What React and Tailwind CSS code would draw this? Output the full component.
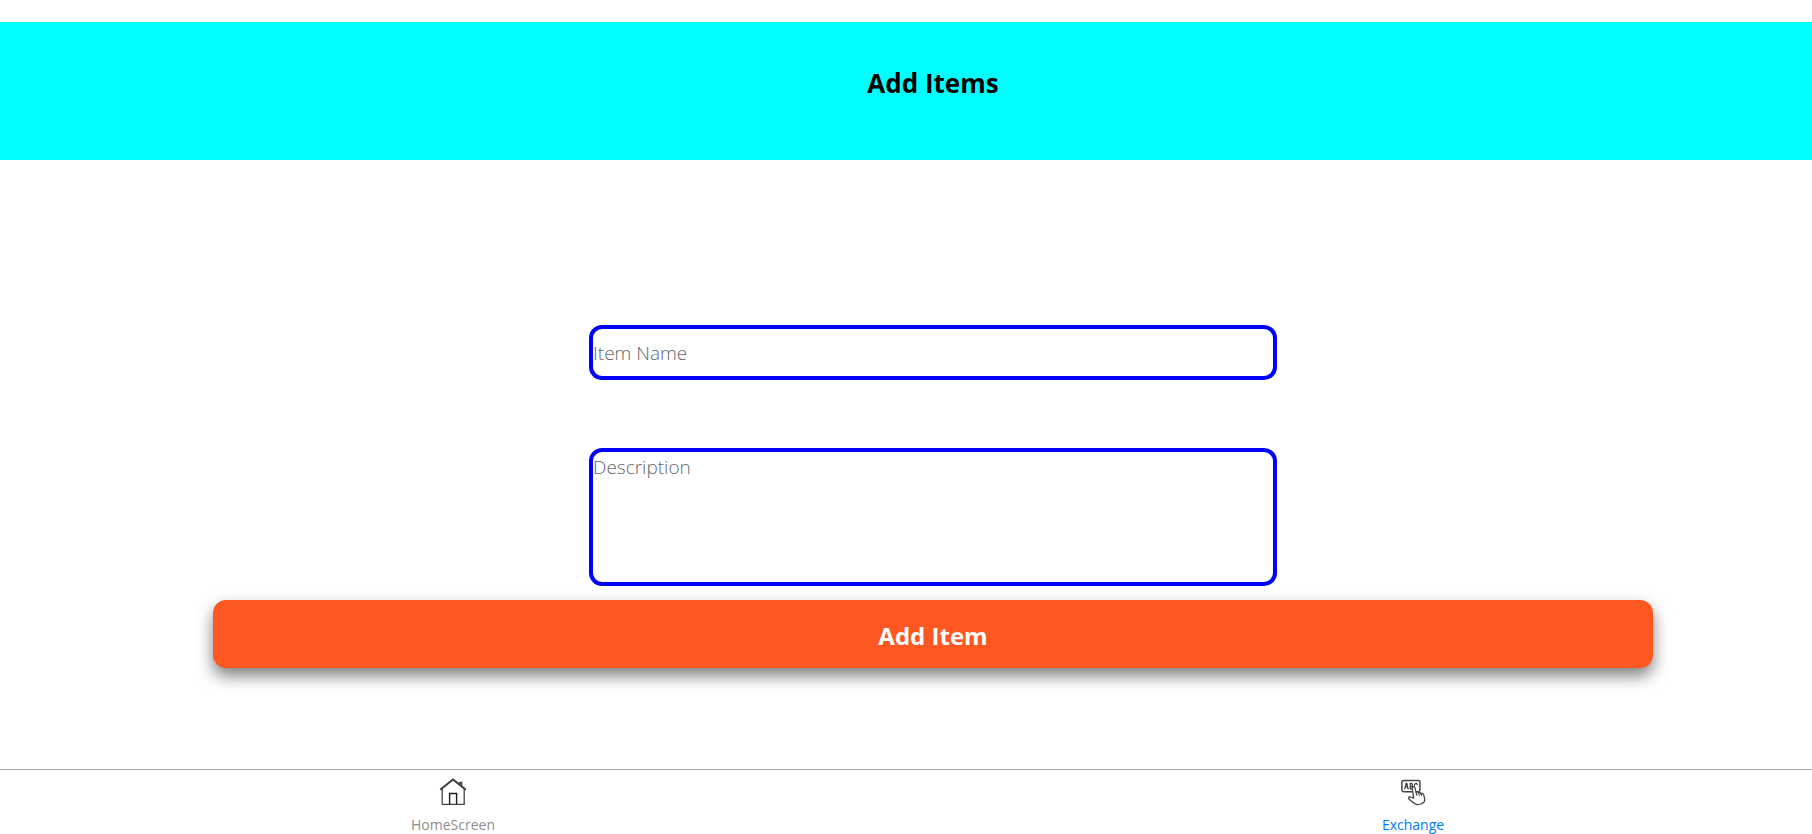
function HomeIcon() {
  return (
    <svg viewBox="0 0 30 30" className="size-[30px]" fill="none" stroke="#444" strokeWidth="1.300" aria-hidden="true">
      <path d="M4.200 12V27.400H26.200V12" />
      <path d="M2.200 12.800 15 2.500 27.800 12.800" stroke="#3a3a3a" strokeWidth="1.900" />
      <path d="M11.600 27V16.500H18.600V27" stroke="#1c1c1c" strokeWidth="1.400" />
      <path d="M20 5.200 24.300 4.600V9Z" fill="#444" stroke="none" />
    </svg>
  );
}

function ExchangeIcon() {
  return (
    <svg viewBox="0 0 30 30" className="size-[30px]" fill="none" stroke="#444" strokeWidth="1.500" strokeLinecap="round" strokeLinejoin="round" aria-hidden="true">
      <rect x="3.900" y="3.500" width="18" height="11.200" rx="1.600" />
      <g stroke="#333" strokeWidth="1.200">
        <path d="M6.800 11.800 8.200 6.400h.6l1.300 5.400M7.300 10h2.400" />
        <path d="M12.200 6.400v5.400h1c2 0 2-2.600.2-2.700 1.500-.3 1.300-2.700-.2-2.700Z" />
        <path d="M19.400 7.800c-.6-2-2.900-1.800-2.900.8" />
      </g>
      <path
        d="M14.200 11.300c-.2-1.800 2.400-2.200 2.800-.4l1.100 4.500c.7-.8 2.200-.5 2.500.5.800-.7 2.200-.3 2.500.7 1-.5 2.300 0 2.600 1.200l.9 3.500c.5 2.300-.5 4.100-2.300 5l-1.600.7c-2.800 1-5.500.4-7.200-1.200l-4.400-3.600c-1.400-1.400 0-2.900 1.500-2.200l3.100 1.200Z"
        fill="#fff"
        strokeWidth="1.300"
      />
      <path d="m18.100 15.400.7 2.700M20.600 15.900l.6 2.200M23.100 16.600l.5 1.900" strokeWidth="1.200" />
    </svg>
  );
}

export default function App() {
  return (
    <div className="flex min-h-screen flex-col bg-white pt-[22px] font-['Open_Sans','Noto_Sans',sans-serif]">
      <header className="h-[138px] bg-[#00ffff] pt-[43px] pl-[54px] text-center">
        <h1 className="text-[26px] leading-9 font-bold text-black">Add Items</h1>
      </header>

      <main className="flex flex-1 flex-col items-center pt-[165px] pl-[54px]">
        <input
          type="text"
          aria-label="Item Name"
          placeholder="Item Name"
          className="h-[55px] w-full max-w-[688px] rounded-[13px] border-4 border-[#0000ff] pt-px text-[19px] leading-6 font-light text-black outline-none placeholder:text-[#666666]"
        />
        <textarea
          aria-label="Description"
          placeholder="Description"
          className="mt-[68px] block h-[138px] w-full max-w-[688px] resize-none rounded-[13px] border-4 border-[#0000ff] pt-[3px] text-[19px] leading-6 font-light text-black outline-none placeholder:text-[#666666]"
        />
        <button
          type="button"
          className="mt-[14px] h-[68px] w-full max-w-[1440px] rounded-[13px] bg-[#ff5722] pt-1 text-[24px] leading-8 font-bold text-white shadow-[0_8px_16px_rgba(0,0,0,0.5)]"
        >
          Add Item
        </button>
      </main>

      <nav className="grid h-[65px] grid-cols-2 border-t border-[#a7a7a7] bg-white text-[14px] leading-5">
        <a href="#home" className="flex flex-col items-center gap-2 pt-[7px] text-[#8e8e8f]">
          <HomeIcon />
          HomeScreen
        </a>
        <a href="#exchange" aria-current="page" className="flex flex-col items-center gap-2 pt-[7px] pl-[108px] text-[#007aff]">
          <ExchangeIcon />
          Exchange
        </a>
      </nav>
    </div>
  );
}
